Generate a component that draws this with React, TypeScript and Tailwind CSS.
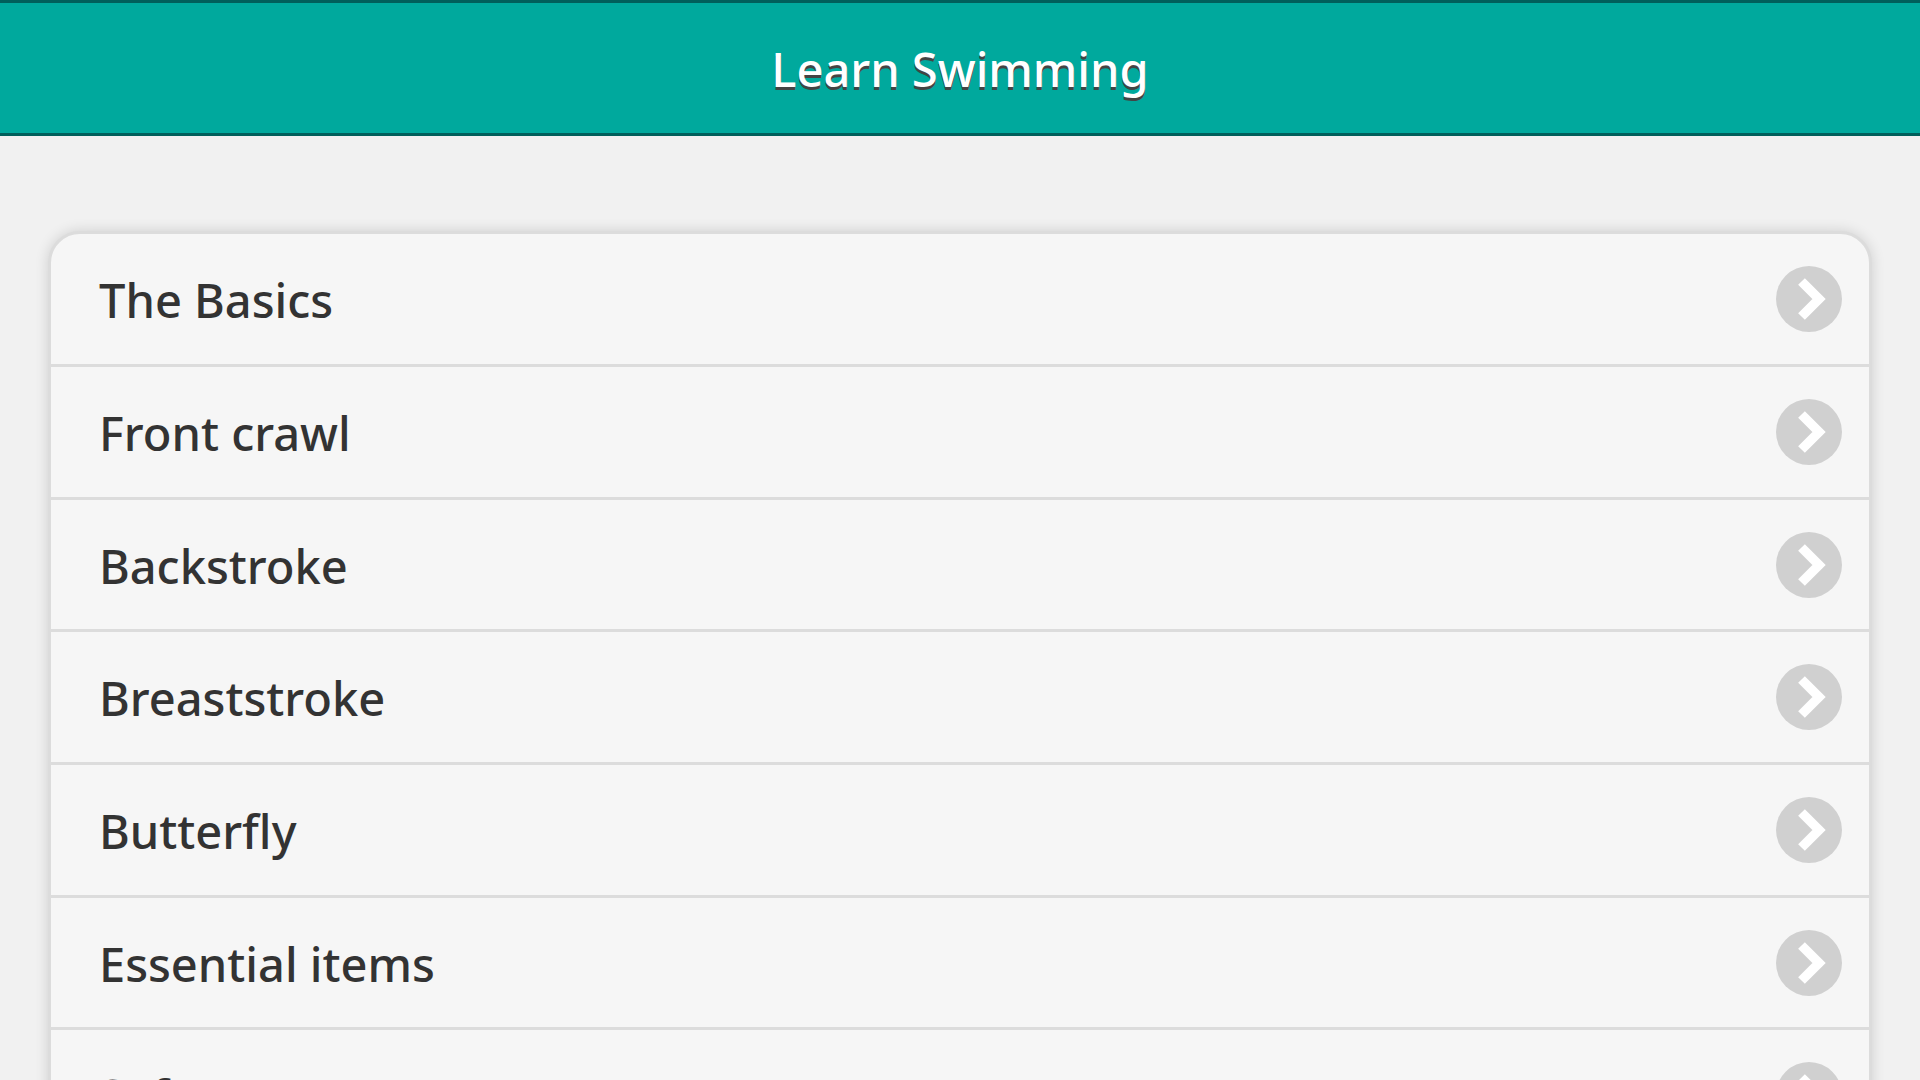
const lessons = [
  "The Basics",
  "Front crawl",
  "Backstroke",
  "Breaststroke",
  "Butterfly",
  "Essential items",
  "Safety",
];

const ArrowIcon = () => (
  <svg viewBox="0 0 66 66" className="size-[66px] shrink-0" aria-hidden="true">
    <circle cx="33" cy="33" r="33" fill="#d0d0d0" />
    <path d="M25.5 15.5 43 33 25.5 50.5" fill="none" stroke="#fff" strokeWidth="9.5" />
  </svg>
);

export default function App() {
  return (
    <div className="h-screen overflow-hidden bg-[#f1f1f1] font-['Noto_Sans',sans-serif] text-[47px] leading-12 font-medium text-[#333]">
      <header className="flex h-34 items-center justify-center border-y-3 border-[#005f5b] bg-[#00a99d] pt-0.5">
        <h1 className="text-white [text-shadow:0_3px_0_#444]">Learn Swimming</h1>
      </header>
      <main className="px-12 pt-[95px]">
        <ul className="overflow-hidden rounded-t-[32px] border-3 border-[#dcdcdc] bg-[#f6f6f6] shadow-[0_0_14px_rgba(0,0,0,0.14)]">
          {lessons.map((lesson) => (
            <li key={lesson} className="h-[133px] border-b-3 border-[#dcdcdc] nth-[3n]:h-33">
              <a href="#" className="flex h-full items-center justify-between pr-[27px] pl-12">
                <span className="pt-0.5">{lesson}</span>
                <ArrowIcon />
              </a>
            </li>
          ))}
        </ul>
      </main>
    </div>
  );
}
